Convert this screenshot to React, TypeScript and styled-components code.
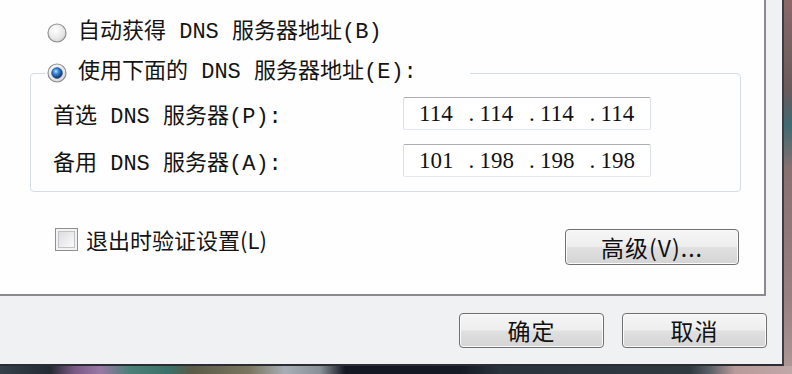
import React from 'react'
import styled, { createGlobalStyle } from 'styled-components'

const GlobalStyle = createGlobalStyle`
  html, body {
    margin: 0;
    padding: 0;
  }
  body {
    font-family: "Liberation Mono", "Noto Sans CJK SC", monospace;
    font-size: 22px;
    color: #141414;
  }
`

function Radio({ checked }: { checked?: boolean }) {
  return (
    <RadioIcon width="20" height="20" viewBox="0 0 20 20">
      <defs>
        <radialGradient id="rbg" cx="40%" cy="35%" r="70%">
          <stop offset="0%" stopColor="#ffffff" />
          <stop offset="70%" stopColor="#e6e6e6" />
          <stop offset="100%" stopColor="#cfcfcf" />
        </radialGradient>
        <radialGradient id="rdot" cx="40%" cy="35%" r="65%">
          <stop offset="0%" stopColor="#bfe4ff" />
          <stop offset="35%" stopColor="#3c8ee0" />
          <stop offset="100%" stopColor="#0c2f6e" />
        </radialGradient>
      </defs>
      <circle cx="10" cy="10" r="9" fill="url(#rbg)" stroke="#8f9092" strokeWidth="1.2" />
      {checked && <circle cx="10" cy="10" r="5.4" fill="url(#rdot)" stroke="#1b3e78" strokeWidth="0.6" />}
    </RadioIcon>
  )
}

function IpField({ parts }: { parts: string[] }) {
  return (
    <IpBox>
      {parts.map((p, i) => (
        <Segment key={i}>
          <Dot>{i === 0 ? '' : '.'}</Dot>
          {p}
        </Segment>
      ))}
    </IpBox>
  )
}

function App() {
  return (
    <Desktop>
      <GlobalStyle />
      <Window>
        <Panel>
          <RadioRow>
            <Radio />
            <span>自动获得 DNS 服务器地址(B)</span>
          </RadioRow>
          <Group>
            <Legend>
              <Radio checked />
              <span>使用下面的 DNS 服务器地址(E):</span>
            </Legend>
            <FieldRow>
              <Label>首选 DNS 服务器(P):</Label>
              <IpField parts={['114', '114', '114', '114']} />
            </FieldRow>
            <FieldRow>
              <Label>备用 DNS 服务器(A):</Label>
              <IpField parts={['101', '198', '198', '198']} />
            </FieldRow>
          </Group>
          <OptionRow>
            <CheckLabel>
              <CheckBox />
              <span>退出时验证设置(L)</span>
            </CheckLabel>
            <Button $width={174} $height={36}>高级(V)...</Button>
          </OptionRow>
        </Panel>
        <Footer>
          <Button $width={145} $height={35}>确定</Button>
          <Button $width={145} $height={35}>取消</Button>
        </Footer>
      </Window>
    </Desktop>
  )
}

const Desktop = styled.div`
  width: 792px;
  height: 374px;
  overflow: hidden;
  display: grid;
  grid-template-columns: 784px 8px;
  grid-template-rows: 366px 8px;
  background:
    linear-gradient(90deg, #34404a 0px, #232a32 50px, #7a5a85 75px, #9a78a5 100px,
      #4a8078 130px, #3a7068 170px, #5a5a48 190px, #7a7660 250px, #a8aeb6 285px,
      #8a9098 320px, #141822 345px, #161a24 460px, #2a323c 500px, #303840 690px,
      #5a6068 710px, #b89a9a 735px, #c0a8a8 792px) bottom / 100% 8px no-repeat,
    linear-gradient(180deg, #8a6868 0px, #6a5a5c 90px, #3e6a72 125px, #8a7070 170px,
      #9a8080 300px, #b09898 374px);
`

const Window = styled.div`
  box-sizing: border-box;
  width: 784px;
  height: 366px;
  background: #f0f1f3;
  border-right: 2px solid #3c3c44;
  border-bottom: 2px solid #2c2c34;
  display: flex;
  flex-direction: column;
`

const Panel = styled.div`
  box-sizing: border-box;
  width: 766px;
  height: 296px;
  background: #fefefe;
  border-right: 2px solid #8a8a94;
  border-bottom: 2px solid #8a8a8e;
  padding: 23px 0 0 30px;
  display: flex;
  flex-direction: column;
`

const RadioIcon = styled.svg`
  flex: none;
  display: block;
`

const RadioRow = styled.div`
  display: flex;
  align-items: center;
  gap: 11px;
  height: 20px;
  line-height: 20px;
  margin-left: 17px;
  white-space: nowrap;
`

const Group = styled.fieldset`
  box-sizing: border-box;
  width: 711px;
  margin: 20px 0 0 0;
  padding: 14px 0 14px 0;
  border: 1px solid #d5dde4;
  border-radius: 4px;
  display: flex;
  flex-direction: column;
  gap: 14px;
`

const Legend = styled.legend`
  box-sizing: border-box;
  width: 425px;
  margin-left: 14px;
  padding: 0 0 0 2px;
  height: 20px;
  line-height: 20px;
  display: flex;
  align-items: center;
  gap: 11px;
  white-space: nowrap;
`

const FieldRow = styled.div`
  display: flex;
  align-items: center;
  height: 33px;
  padding-left: 22px;
`

const Label = styled.span`
  width: 350px;
  white-space: nowrap;
`

const IpBox = styled.div`
  box-sizing: border-box;
  width: 248px;
  height: 33px;
  padding-left: 4px;
  display: flex;
  align-items: center;
  background: #ffffff;
  border: 1px solid #dbdfe6;
  border-top-color: #abadb3;
  border-bottom-color: #e3e9ef;
  border-radius: 2px;
  font-family: "Liberation Serif", serif;
  font-size: 23px;
  color: #111;
`

const Segment = styled.span`
  width: 62px;
  display: flex;
  white-space: nowrap;
`

const Dot = styled.span`
  width: 11px;
`

const OptionRow = styled.div`
  display: flex;
  justify-content: space-between;
  align-items: flex-start;
  margin-top: 35px;
  padding: 0 25px;
`

const CheckLabel = styled.label`
  display: flex;
  align-items: center;
  gap: 8px;
  height: 24px;
  line-height: 24px;
  white-space: nowrap;
  font-family: "Noto Sans CJK SC", sans-serif;
  font-size: 22px;
`

const CheckBox = styled.span`
  box-sizing: border-box;
  width: 23px;
  height: 23px;
  border: 1px solid #8e8f8f;
  background: #f4f4f4;
  box-shadow: inset 0 0 0 2px #f2f2f2, inset 0 0 0 3px #c0c2c6;
  background-image: linear-gradient(135deg, #d6d7da 0%, #f4f4f4 70%, #ffffff 100%);
`

const Button = styled.button<{ $width: number; $height: number }>`
  box-sizing: border-box;
  width: ${p => p.$width}px;
  height: ${p => p.$height}px;
  margin-top: 2px;
  padding: 0;
  border: 1px solid #707070;
  border-radius: 4px;
  background: linear-gradient(#f6f6f6 0%, #eeeeee 48%, #e0e0e0 52%, #d4d4d4 100%);
  box-shadow: inset 0 0 0 1px #fbfbfb;
  font-family: "Noto Sans CJK SC", sans-serif;
  font-size: 23px;
  line-height: 1;
  color: #111;
  letter-spacing: 1px;
`

const Footer = styled.div`
  flex: 1;
  display: flex;
  justify-content: flex-end;
  align-items: flex-start;
  gap: 18px;
  padding: 15px 15px 0 0;
`

export default App
